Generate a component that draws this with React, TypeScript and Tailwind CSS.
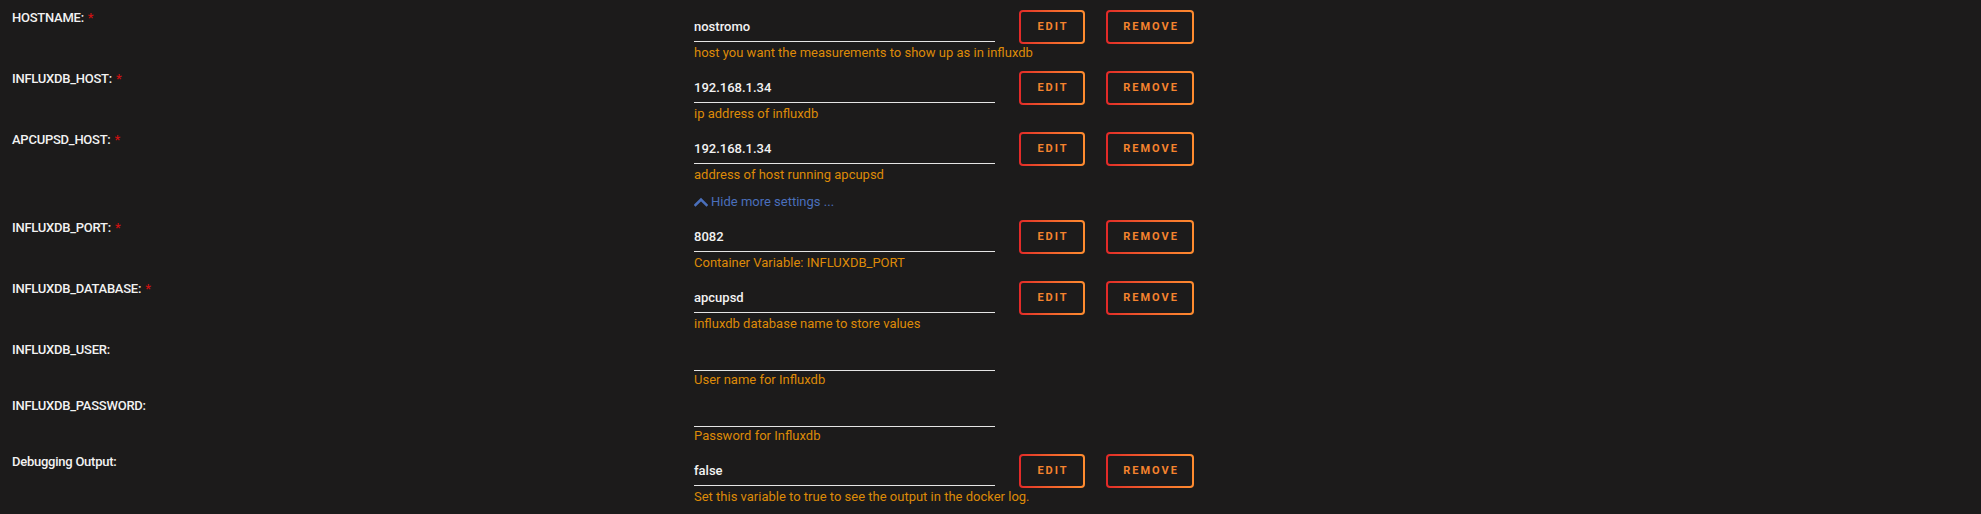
import React from "react";

type Field = {
  label: string;
  required?: boolean;
  value: string;
  desc: string;
  buttons?: boolean;
};

const top: Field[] = [
  { label: "HOSTNAME:", required: true, value: "nostromo", desc: "host you want the measurements to show up as in influxdb", buttons: true },
  { label: "INFLUXDB_HOST:", required: true, value: "192.168.1.34", desc: "ip address of influxdb", buttons: true },
  { label: "APCUPSD_HOST:", required: true, value: "192.168.1.34", desc: "address of host running apcupsd", buttons: true },
];

const more: Field[] = [
  { label: "INFLUXDB_PORT:", required: true, value: "8082", desc: "Container Variable: INFLUXDB_PORT", buttons: true },
  { label: "INFLUXDB_DATABASE:", required: true, value: "apcupsd", desc: "influxdb database name to store values", buttons: true },
  { label: "INFLUXDB_USER:", value: "", desc: "User name for Influxdb" },
  { label: "INFLUXDB_PASSWORD:", value: "", desc: "Password for Influxdb" },
  { label: "Debugging Output:", value: "false", desc: "Set this variable to true to see the output in the docker log.", buttons: true },
];

function GradButton({ text, width }: { text: string; width: string }) {
  return (
    <div className={`${width} h-[34px] rounded-[4px] bg-gradient-to-r from-[#e22828] to-[#ff8c2f] p-[2px]`}>
      <div className="w-full h-full rounded-[2px] bg-[#1c1b1b] flex items-center justify-center pl-[2px] text-[11px] font-bold tracking-[2px] text-[#f5832e]">
        {text}
      </div>
    </div>
  );
}

function Row({ f }: { f: Field }) {
  return (
    <div className="flex pt-[10px] pl-[12px]">
      {/* label */}
      <div className="w-[682px] leading-[16px] text-[13px] font-medium tracking-[-0.25px] text-[#f2f2f2]">
        {f.label}
        {f.required && <span className="text-[#cc1111] ml-[4px]">*</span>}
      </div>

      {/* input + buttons */}
      <div className="flex flex-col">
        <div className="flex items-center">
          <div className="w-[301px] h-[29px] border-b border-[#e5e5e5] flex items-center text-[13px] font-medium text-[#f2f2f2]">
            {f.value}
          </div>
          {f.buttons && (
            <div className="flex gap-[21px] ml-[24px]">
              <GradButton text="EDIT" width="w-[66px]" />
              <GradButton text="REMOVE" width="w-[88px]" />
            </div>
          )}
        </div>
        <div className="mt-[1px] leading-[16px] text-[13px] text-[#dd8a08]">{f.desc}</div>
      </div>
    </div>
  );
}

export default function App() {
  return (
    <div className="w-[1981px] h-[514px] bg-[#1c1b1b] overflow-hidden" style={{ fontFamily: "Roboto, 'Liberation Sans', sans-serif" }}>
      {top.map((f, i) => (
        <Row key={i} f={f} />
      ))}

      {/* toggle */}
      <div className="pt-[11px] h-[27px] pl-[694px] flex items-start">
        <div className="flex items-center gap-[2px] leading-[16px] text-[13px] text-[#4a6fbb]">
          <svg width="14" height="10" viewBox="0 0 14 10" className="mr-[1px]">
            <path d="M1.5 8 L7 2.5 L12.5 8" fill="none" stroke="#4a6fbb" strokeWidth="2.6" strokeLinecap="square" />
          </svg>
          Hide more settings ...
        </div>
      </div>

      {more.map((f, i) => (
        <Row key={i} f={f} />
      ))}
    </div>
  );
}
